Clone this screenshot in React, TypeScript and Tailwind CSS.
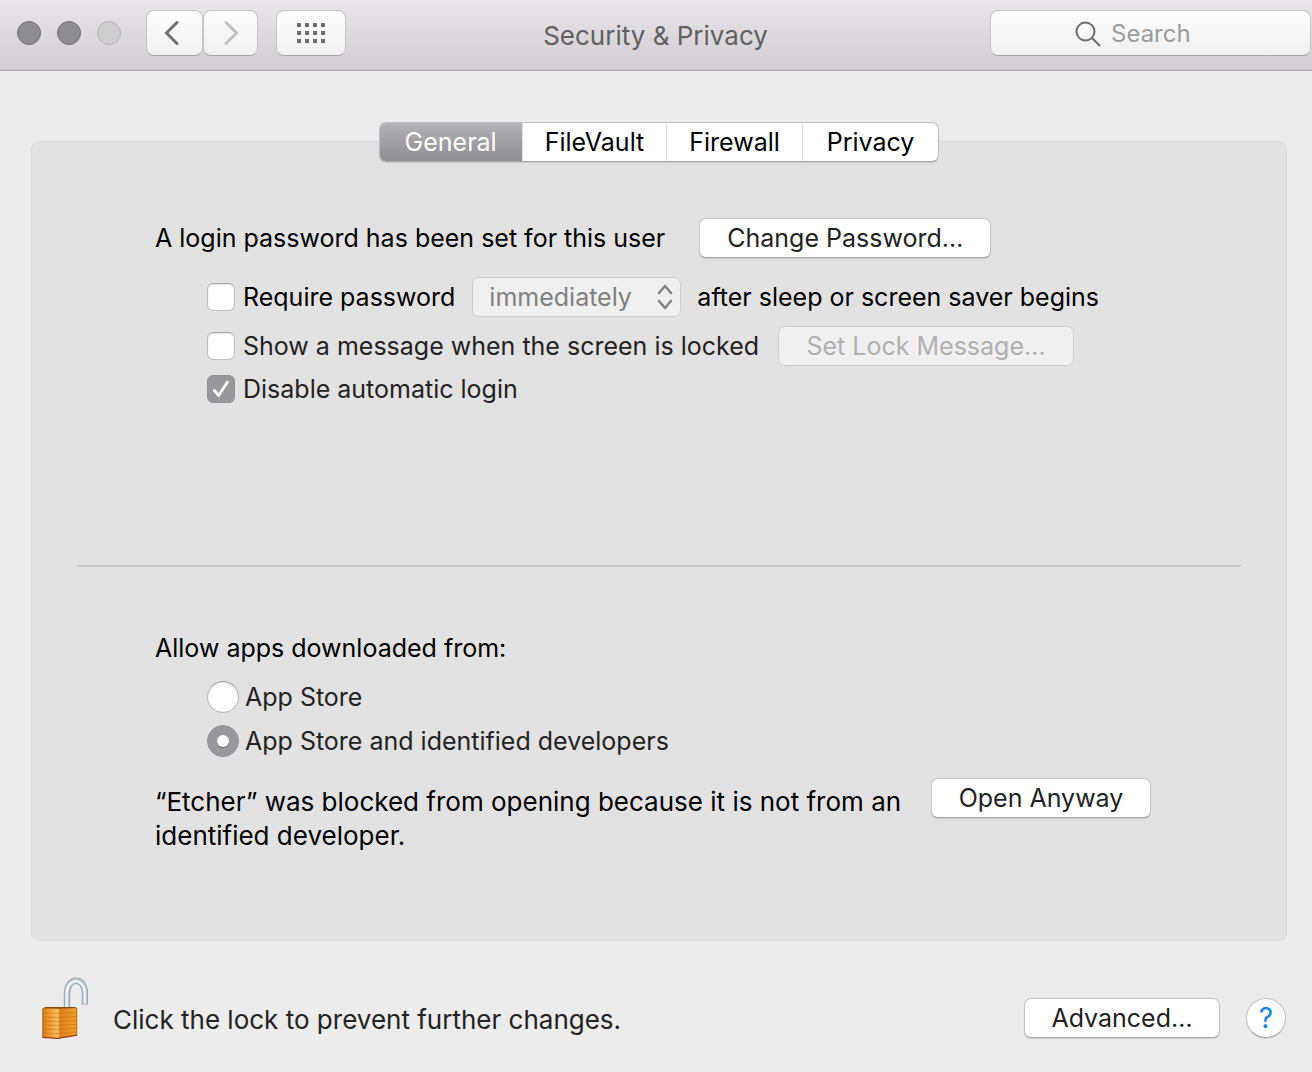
import { useState, type ReactNode } from "react";
import clsx from "clsx";

const tabs = ["General", "FileVault", "Firewall", "Privacy"];

function PushButton({
  children,
  disabled,
  className,
}: {
  children: ReactNode;
  disabled?: boolean;
  className?: string;
}) {
  return (
    <button
      type="button"
      disabled={disabled}
      className={clsx(
        "h-10 shrink-0 rounded-[7px] border whitespace-nowrap",
        disabled
          ? "border-[#cdcdcd] bg-[#f0f0f0] text-[#b0b0b0]"
          : "border-[#c4c4c4] border-b-[#a9a9a9] bg-white text-[#222] shadow-[0_1px_1px_rgba(0,0,0,0.12)]",
        className
      )}
    >
      {children}
    </button>
  );
}

function ToolbarButton({
  children,
  label,
  className,
}: {
  children: ReactNode;
  label: string;
  className: string;
}) {
  return (
    <button
      type="button"
      aria-label={label}
      className={clsx(
        "flex h-[46px] items-center justify-center rounded-lg border border-[#c6c4c7] border-b-[#a5a3a6] bg-linear-to-b from-[#fefefe] to-[#f0f0f0]",
        className
      )}
    >
      {children}
    </button>
  );
}

function Checkbox({ id, defaultChecked }: { id: string; defaultChecked?: boolean }) {
  return (
    <span className="grid size-7 shrink-0 place-items-center">
      <input
        id={id}
        type="checkbox"
        defaultChecked={defaultChecked}
        className="peer col-start-1 row-start-1 size-7 appearance-none rounded-md border border-[#bdbdbd] border-t-[#a8a8a8] bg-white shadow-[inset_0_1px_2px_rgba(0,0,0,0.12)] checked:border-[#939297] checked:bg-[#98979c] checked:shadow-none"
      />
      <svg
        viewBox="0 0 28 28"
        className="pointer-events-none invisible col-start-1 row-start-1 size-7 peer-checked:visible"
        fill="none"
        stroke="#fff"
        strokeWidth="2.8"
        strokeLinecap="round"
        strokeLinejoin="round"
      >
        <path d="M7.3 15.5L11.7 20.6L20.3 7.3" />
      </svg>
    </span>
  );
}

function Radio({ id, defaultChecked }: { id: string; defaultChecked?: boolean }) {
  return (
    <span className="grid size-8 shrink-0 place-items-center">
      <input
        id={id}
        type="radio"
        name="source"
        defaultChecked={defaultChecked}
        className="peer col-start-1 row-start-1 size-8 appearance-none rounded-full border border-[#b9b9b9] border-t-[#a0a0a0] bg-white shadow-[inset_0_1px_2px_rgba(0,0,0,0.15)] checked:border-[#939297] checked:bg-[#98979c] checked:shadow-none"
      />
      <span className="pointer-events-none invisible col-start-1 row-start-1 size-3 rounded-full bg-white shadow-[0_1px_1px_rgba(0,0,0,0.25)] peer-checked:visible" />
    </span>
  );
}

function Padlock() {
  return (
    <svg viewBox="0 0 48 64" className="h-16 w-12" fill="none">
      <defs>
        <linearGradient id="brass" x1="0" x2="1" y1="0" y2="0">
          <stop offset="0" stopColor="#dd7a12" />
          <stop offset="0.25" stopColor="#f3a035" />
          <stop offset="0.45" stopColor="#ffc466" />
          <stop offset="0.5" stopColor="#e0811a" />
          <stop offset="1" stopColor="#f3a030" />
        </linearGradient>
      </defs>
      <path d="M27 32V17C27 -.5 45 -.5 45 16V27.5" stroke="#8b9ba2" strokeWidth="6.4" />
      <path d="M27 32V17C27 -.5 45 -.5 45 16V27" stroke="#bccad0" strokeWidth="4.8" />
      <path d="M26.6 32V17C26.6 .2 44.4 .2 44.8 16V26.5" stroke="#f0f6f8" strokeWidth="2.2" />
      <path d="M2.5 31.5L6 30H34.5L37 31V58.5L18 61.5L2.5 60.5Z" fill="url(#brass)" />
      <path d="M2.5 31.3L6 30H34.5L37 31L18 31.8Z" fill="#7d4a1c" />
      <path
        d="M3 36L18 36.4L36.5 35.6M3 40L18 40.4L36.5 39.6M3 44L18 44.4L36.5 43.6M3 48L18 48.4L36.5 47.2M3 52L18 52.4L36.5 51M3 56L18 56.6L36.5 54.8"
        stroke="#bf650d"
        strokeOpacity="0.5"
      />
      <path d="M2.8 31.3V60.2M36.7 31V58.4" stroke="#a5590f" strokeWidth="0.8" />
      <path d="M2.5 60.3L18 61.3L37 58.2" stroke="#8f3c16" strokeWidth="1.2" />
    </svg>
  );
}

function TitleBar() {
  return (
    <header className="grid h-[71px] grid-cols-[1fr_auto_1fr] items-center border-b border-[#a9a8aa] bg-linear-to-b from-[#e8e6e9] to-[#d0ced1] pr-px pb-1">
      <div className="flex items-center pl-[17px]">
        <div className="flex gap-4">
          <button type="button" aria-label="Close" className="size-6 rounded-full border border-[#747378] bg-[#8e8d92]" />
          <button type="button" aria-label="Minimize" className="size-6 rounded-full border border-[#747378] bg-[#8e8d92]" />
          <button type="button" aria-label="Zoom" disabled className="size-6 rounded-full border border-[#b3b2b4] bg-[#cfcecf]" />
        </div>
        <div className="ml-[25px] flex">
          <ToolbarButton label="Back" className="w-[57px]">
            <svg viewBox="0 0 16 26" className="mr-2 h-[26px] w-4" fill="none" stroke="#717171" strokeWidth="3" strokeLinecap="round">
              <path d="M14 2.5L3.5 13L14 23.5" />
            </svg>
          </ToolbarButton>
          <ToolbarButton label="Forward" className="w-[55px]">
            <svg viewBox="0 0 16 26" className="h-[26px] w-4" fill="none" stroke="#c1c1c1" strokeWidth="3" strokeLinecap="round">
              <path d="M3 2.5L13.5 13L3 23.5" />
            </svg>
          </ToolbarButton>
        </div>
        <ToolbarButton label="Show All" className="ml-[18px] w-[70px]">
          <svg viewBox="0 0 28 20" className="h-5 w-7" fill="#6c6c6c">
            {[0, 8, 16].map((y) =>
              [0, 8, 16, 24].map((x) => (
                <rect key={`${x}-${y}`} x={x} y={y} width="4" height="4" />
              ))
            )}
          </svg>
        </ToolbarButton>
      </div>
      <h1 className="pt-[6px] text-[26px] text-[#606060]">Security &amp; Privacy</h1>
      <label className="ml-auto flex h-[46px] w-[321px] items-center rounded-lg border border-[#c6c4c7] border-b-[#a5a3a6] bg-linear-to-b from-[#fefefe] to-[#f0f0f0] pt-[2px] pl-[84px]">
        <svg viewBox="0 0 26 26" className="size-[26px] shrink-0" fill="none" stroke="#6c6c6c" strokeWidth="2">
          <circle cx="10.5" cy="10.5" r="9" />
          <path d="M17 17L25 25" />
        </svg>
        <input
          type="search"
          aria-label="Search"
          placeholder="Search"
          className="ml-[10px] w-full min-w-0 text-2xl outline-none placeholder:text-[#9c9c9c]"
        />
      </label>
    </header>
  );
}

export default function App() {
  const [active, setActive] = useState("General");

  return (
    <div className="flex min-h-screen flex-col bg-[#ececec] font-[Inter,'Liberation_Sans',sans-serif] text-[25px] leading-[34px] text-black">
      <TitleBar />
      <main className="px-[31px] pt-[51px] pr-[25px]">
        <div className="relative flex justify-center">
          <div
            role="tablist"
            className="flex h-10 overflow-hidden rounded-[7px] border border-[#bdbdbd] border-b-[#a9a9a9] bg-white shadow-[0_1px_1px_rgba(0,0,0,0.12)]"
          >
            {tabs.map((tab) => (
              <button
                key={tab}
                type="button"
                role="tab"
                aria-selected={active === tab}
                onClick={() => setActive(tab)}
                className={clsx(
                  "border-r border-[#dedede] px-[22px] first:px-[25px] last:border-r-0 last:px-6",
                  active === tab && "bg-linear-to-b from-[#b2b1b6] to-[#8f8e93] text-white"
                )}
              >
                {tab}
              </button>
            ))}
          </div>
        </div>

        <section className="-mt-[21px] rounded-lg border border-[#d9d9d9] bg-[#e2e2e2] px-[45px] pt-[76px] pb-[87px]">
          <div className="px-[78px]">
            <div className="flex items-center gap-[34px]">
              <p>A login password has been set for this user</p>
              <PushButton className="w-[292px]">Change Password…</PushButton>
            </div>
            <div className="mt-[19px] flex items-center pl-[52px]">
              <Checkbox id="require" />
              <label htmlFor="require" className="ml-2">
                Require password
              </label>
              <span className="ml-[17px] grid items-center">
                <select
                  disabled
                  aria-label="Password delay"
                  className="col-start-1 row-start-1 h-10 w-[209px] appearance-none rounded-[7px] border border-[#cdcdcd] bg-[#f0f0f0] pl-4 text-[#808080] opacity-100"
                >
                  <option>immediately</option>
                </select>
                <svg
                  viewBox="0 0 16 26"
                  className="pointer-events-none col-start-1 row-start-1 mr-2 h-[26px] w-4 justify-self-end"
                  fill="none"
                  stroke="#858585"
                  strokeWidth="2.6"
                  strokeLinecap="round"
                  strokeLinejoin="round"
                >
                  <path d="M2 9L8 2L14 9M2 17L8 24L14 17" />
                </svg>
              </span>
              <span className="ml-4">after sleep or screen saver begins</span>
            </div>
            <div className="mt-[9px] flex items-center pl-[52px] text-[#222]">
              <Checkbox id="message" />
              <label htmlFor="message" className="ml-2">
                Show a message when the screen is locked
              </label>
              <PushButton disabled className="ml-[19px] w-[296px]">
                Set Lock Message…
              </PushButton>
            </div>
            <div className="mt-[9px] flex h-7 items-center pl-[52px] text-[#222]">
              <Checkbox id="autologin" defaultChecked />
              <label htmlFor="autologin" className="ml-2">
                Disable automatic login
              </label>
            </div>
          </div>

          <hr className="mt-[162px] border-t-2 border-[#cbcbcb]" />

          <div className="px-[78px] pt-16">
            <fieldset>
              <legend>Allow apps downloaded from:</legend>
              <div className="mt-4 flex h-8 items-center pl-[52px] text-[#222]">
                <Radio id="store" />
                <label htmlFor="store" className="ml-[6px]">
                  App Store
                </label>
              </div>
              <div className="mt-3 flex h-8 items-center pl-[52px] text-[#222]">
                <Radio id="identified" defaultChecked />
                <label htmlFor="identified" className="ml-[6px]">
                  App Store and identified developers
                </label>
              </div>
            </fieldset>
            <div className="mt-[21px] flex items-start">
              <p className="max-w-[776px] flex-1 pt-[7px] pr-5 text-[26px]">
                “Etcher” was blocked from opening because it is not from an identified developer.
              </p>
              <PushButton className="w-[220px]">Open Anyway</PushButton>
            </div>
          </div>
        </section>
      </main>

      <footer className="flex items-center pt-9 pr-[26px] pb-[31px] pl-10 text-[#222]">
        <button type="button" aria-label="Lock">
          <Padlock />
        </button>
        <p className="ml-[25px] pt-[22px] text-[26px]">Click the lock to prevent further changes.</p>
        <div className="ml-auto flex items-center gap-[26px] pt-[18px]">
          <PushButton className="w-[196px]">Advanced…</PushButton>
          <button
            type="button"
            aria-label="Help"
            className="size-10 rounded-full border border-[#c4c4c4] border-b-[#a9a9a9] bg-white text-[28px] text-[#0a84ff] shadow-[0_1px_1px_rgba(0,0,0,0.12)]"
          >
            ?
          </button>
        </div>
      </footer>
    </div>
  );
}
